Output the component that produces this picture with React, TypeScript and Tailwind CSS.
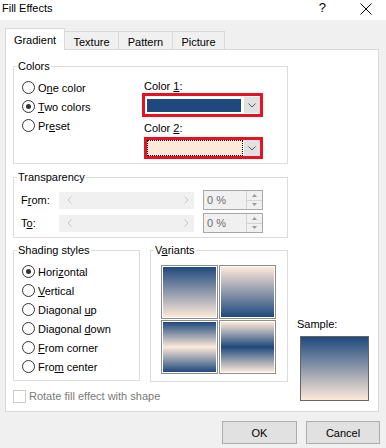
import type { ReactNode } from "react";

function Key({ children }: { children: ReactNode }) {
  return <span className="underline underline-offset-[1px]">{children}</span>;
}

function Radio({ checked, children }: { checked?: boolean; children: ReactNode }) {
  return (
    <div className="flex items-center h-[19px] gap-[3px]">
      <span className="w-[13px] h-[13px] rounded-full border border-[#333333] bg-white flex items-center justify-center">
        {checked && <span className="w-[5px] h-[5px] rounded-full bg-[#333333]" />}
      </span>
      <span className="leading-[14px]">{children}</span>
    </div>
  );
}

function Group({ label, className, children }: { label: ReactNode; className: string; children: ReactNode }) {
  return (
    <div className={"relative border border-[#dcdcdc] " + className}>
      <span className="absolute left-[3px] -top-[8px] bg-white px-px leading-[14px]">{label}</span>
      {children}
    </div>
  );
}

function Chevron() {
  return (
    <svg width="8" height="5" viewBox="0 0 8 5">
      <polyline points="0.5,0.5 4,4 7.5,0.5" fill="none" stroke="#5a5a5a" strokeWidth="1" />
    </svg>
  );
}

function Slider() {
  return (
    <div className="w-[135px] h-[17px] bg-[#f0f0f0] flex items-center justify-between pl-[8px] pr-[5px]">
      <svg width="5" height="8" viewBox="0 0 5 8">
        <polyline points="4.5,0.5 1,4 4.5,7.5" fill="none" stroke="#c4c4c4" strokeWidth="1" />
      </svg>
      <svg width="5" height="8" viewBox="0 0 5 8">
        <polyline points="0.5,0.5 4,4 0.5,7.5" fill="none" stroke="#c4c4c4" strokeWidth="1" />
      </svg>
    </div>
  );
}

function Spin() {
  return (
    <div className="ml-[9px] w-[60px] h-[20px] border border-[#a8a8a8] bg-[#f0f0f0] flex">
      <span className="flex-1 pl-[3px] leading-[18px] text-[#6d6d6d]">0 %</span>
      <div className="w-[16px] flex flex-col border-l border-[#d4d4d4]">
        <div className="flex-1 flex items-center justify-center border-b border-[#d4d4d4]">
          <svg width="5" height="3" viewBox="0 0 5 3">
            <polygon points="0,3 2.5,0 5,3" fill="#9a9a9a" />
          </svg>
        </div>
        <div className="flex-1 flex items-center justify-center">
          <svg width="5" height="3" viewBox="0 0 5 3">
            <polygon points="0,0 2.5,3 5,0" fill="#9a9a9a" />
          </svg>
        </div>
      </div>
    </div>
  );
}

function Tile({ kind }: { kind: number }) {
  const fills = [
    "bg-linear-to-b/srgb from-[#1f497d] to-[#fde9d9]",
    "bg-linear-to-b/srgb from-[#fde9d9] to-[#1f497d]",
    "bg-linear-to-b/srgb from-[#1f497d] via-[#fde9d9] to-[#1f497d]",
    "bg-linear-to-b/srgb from-[#fde9d9] via-[#1f497d] to-[#fde9d9]",
  ];
  return (
    <div className="w-[57px] h-[54px] border border-[#8c8c8c] p-px bg-white">
      <div className={"w-full h-full " + fills[kind]} />
    </div>
  );
}

export default function App() {
  return (
    <div className="w-[386px] h-[448px] bg-[#f0f0f0] text-[11px] text-black flex flex-col font-['Liberation_Sans',Arial,sans-serif]">
      {/* title bar */}
      <div className="h-[20px] bg-white flex items-start pt-px pl-[2px] pr-[14px]">
        <span className="flex-1 leading-[14px]">Fill Effects</span>
        <span className="text-[13px] leading-[14px] mr-[34px]">?</span>
        <svg width="12" height="12" viewBox="0 0 12 12" className="mt-[2px]">
          <path d="M0.5 0.5 L11.5 11.5 M11.5 0.5 L0.5 11.5" stroke="#000" strokeWidth="1" />
        </svg>
      </div>

      {/* tabs */}
      <div className="h-[29px] flex items-end pl-[5px]">
        <div className="relative z-10 -mb-px w-[60px] h-[22px] bg-white border border-b-0 border-[#d9d9d9] flex justify-center pt-[4px] leading-[14px]">
          Gradient
        </div>
        <div className="w-[54px] h-[18px] border border-l-0 border-b-0 border-[#d9d9d9] flex justify-center pt-[3px] leading-[14px]">
          Texture
        </div>
        <div className="w-[54px] h-[18px] border border-l-0 border-b-0 border-[#d9d9d9] flex justify-center pt-[3px] leading-[14px]">
          Pattern
        </div>
        <div className="w-[52px] h-[18px] border border-l-0 border-b-0 border-[#d9d9d9] flex justify-center pt-[3px] leading-[14px]">
          Picture
        </div>
      </div>

      {/* panel */}
      <div className="ml-[5px] w-[374px] h-[363px] bg-white border border-[#d9d9d9] flex">
        <div className="pl-[7px] pt-[16px] flex flex-col">
          {/* colors */}
          <Group label="Colors" className="w-[275px] h-[98px] flex">
            <div className="w-[128px] pl-[8px] pt-[11px] flex flex-col">
              <Radio>
                O<Key>n</Key>e color
              </Radio>
              <Radio checked>
                <Key>T</Key>wo colors
              </Radio>
              <Radio>
                Pr<Key>e</Key>set
              </Radio>
            </div>
            <div className="pt-[13px] flex flex-col">
              <span className="pl-[2px] leading-[13px]">
                Color <Key>1</Key>:
              </span>
              <div className="w-[121px] h-[24px] border-[3px] border-[#e81123] bg-white flex items-center pl-[2px]">
                <div className="w-[94px] h-[13px] bg-[#1f497d]" />
                <div className="ml-[3px] w-[16px] h-[16px] bg-[#e1e1e1] flex items-center justify-center">
                  <Chevron />
                </div>
              </div>
              <span className="mt-[5px] pl-[2px] leading-[13px]">
                Color <Key>2</Key>:
              </span>
              <div className="mt-[2px] ml-[2px] w-[119px] h-[22px] border-[3px] border-[#e81123] bg-white flex items-center">
                <div className="w-[96px] h-[16px] bg-[#fde9d9] border border-dotted border-black" />
                <div className="ml-px w-[16px] h-[16px] bg-[#e1e1e1] flex items-center justify-center">
                  <Chevron />
                </div>
              </div>
            </div>
          </Group>

          {/* transparency */}
          <Group label="Transparency" className="mt-[13px] w-[275px] h-[61px] pl-[7px] pt-[12px] flex flex-col gap-[3px]">
            <div className="flex items-center h-[20px]">
              <span className="w-[38px] leading-[14px]">
                F<Key>r</Key>om:
              </span>
              <Slider />
              <Spin />
            </div>
            <div className="flex items-center h-[20px]">
              <span className="w-[38px] leading-[14px]">
                T<Key>o</Key>:
              </span>
              <Slider />
              <Spin />
            </div>
          </Group>

          {/* shading + variants */}
          <div className="mt-[12px] flex items-start">
            <Group label="Shading styles" className="w-[127px] h-[131px] pl-[8px] pt-[11px] flex flex-col">
              <Radio checked>
                Hori<Key>z</Key>ontal
              </Radio>
              <Radio>
                <Key>V</Key>ertical
              </Radio>
              <Radio>
                Diagonal <Key>u</Key>p
              </Radio>
              <Radio>
                Diagonal <Key>d</Key>own
              </Radio>
              <Radio>
                <Key>F</Key>rom corner
              </Radio>
              <Radio>
                Fro<Key>m</Key> center
              </Radio>
            </Group>
            <Group
              label={
                <>
                  V<Key>a</Key>riants
                </>
              }
              className="ml-[10px] w-[138px] h-[132px] pl-[10px] pt-[14px]"
            >
              <div className="grid grid-cols-[57px_57px] gap-px">
                <Tile kind={0} />
                <Tile kind={1} />
                <Tile kind={2} />
                <Tile kind={3} />
              </div>
            </Group>
          </div>

          {/* rotate */}
          <div className="mt-[7px] flex items-center gap-[3px]">
            <span className="w-[13px] h-[13px] border border-[#cccccc] bg-white" />
            <span className="leading-[14px] text-[#7a7a7a]">Rotate fill effect with shape</span>
          </div>
        </div>

        {/* sample */}
        <div className="ml-[9px] pb-[10px] flex flex-col justify-end">
          <span className="leading-[14px]">Sample:</span>
          <div className="mt-[5px] ml-[3px] w-[69px] h-[65px] border border-[#646464] bg-linear-to-b/srgb from-[#1f497d] to-[#fde9d9]" />
        </div>
      </div>

      {/* buttons */}
      <div className="mt-[9px] flex justify-end gap-[9px] pr-[6px]">
        <button className="w-[75px] h-[23px] bg-[#e1e1e1] border border-[#adadad] leading-[14px]">OK</button>
        <button className="w-[74px] h-[23px] bg-[#e1e1e1] border border-[#adadad] leading-[14px]">Cancel</button>
      </div>
    </div>
  );
}
